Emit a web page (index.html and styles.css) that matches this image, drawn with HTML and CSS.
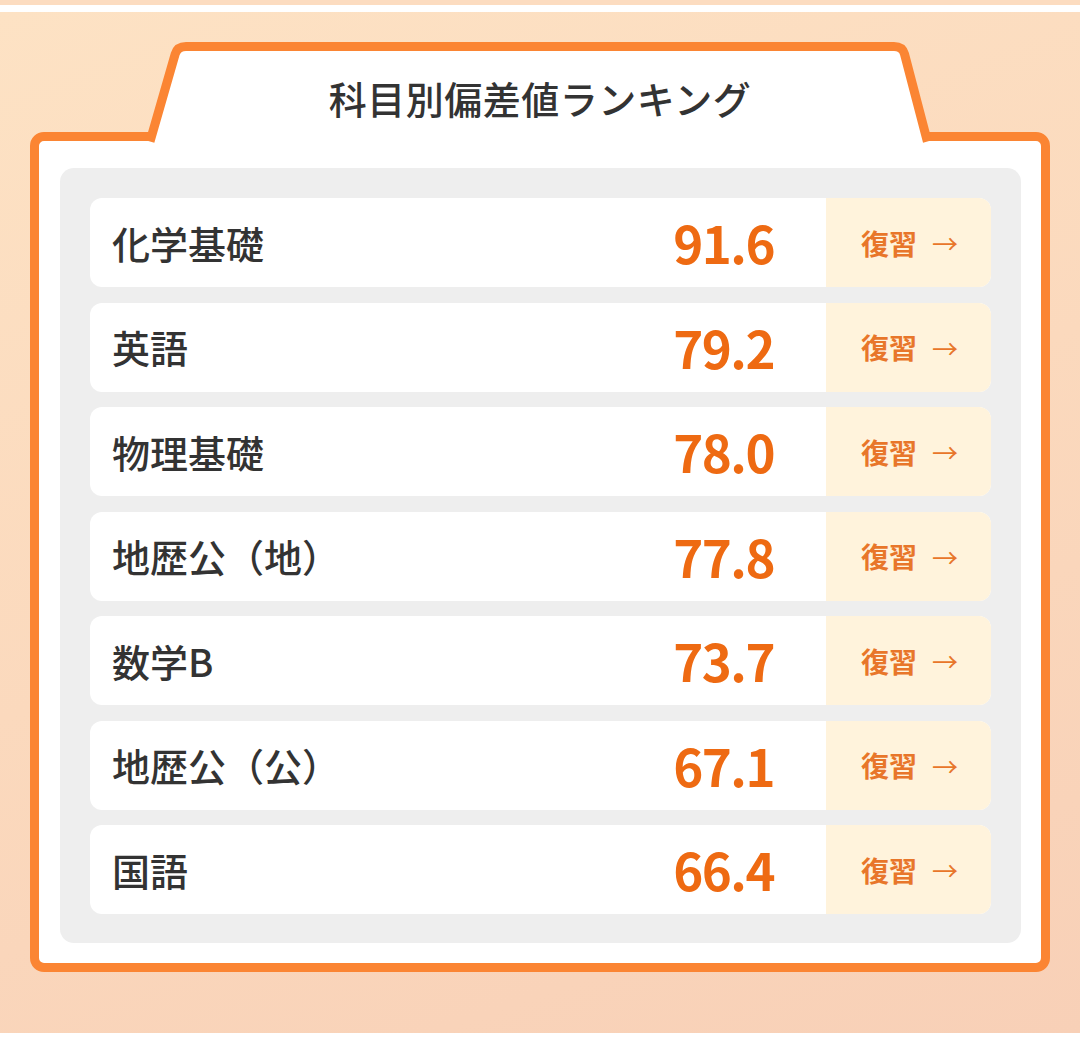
FILE: index.html
```html
<!DOCTYPE html>
<html lang="ja">
<head>
<meta charset="utf-8">
<title>科目別偏差値ランキング</title>
<link rel="stylesheet" href="styles.css">
</head>
<body>
<div class="strip"></div>
<div class="page">
  <div class="frame">
    <div class="tab">
      <svg class="tab-shape" width="1020" height="100" viewBox="0 0 1020 100" aria-hidden="true">
        <path d="M120 99.5 L145.2 12 Q147.4 4.5 156 4.5 L864 4.5 Q872.5 4.5 874.5 12 L897.4 99.5" fill="#ffffff" stroke="#fb8533" stroke-width="9" stroke-linejoin="round"/>
      </svg>
      <h1 class="title">科目別偏差値ランキング</h1>
    </div>
    <div class="card">
      <div class="panel">
        <div class="row"><span class="label">化学基礎</span><span class="score">91.6</span><a class="review">復習<span class="arrow">→</span></a></div>
        <div class="row"><span class="label">英語</span><span class="score">79.2</span><a class="review">復習<span class="arrow">→</span></a></div>
        <div class="row"><span class="label">物理基礎</span><span class="score">78.0</span><a class="review">復習<span class="arrow">→</span></a></div>
        <div class="row"><span class="label">地歴公（地）</span><span class="score">77.8</span><a class="review">復習<span class="arrow">→</span></a></div>
        <div class="row"><span class="label">数学B</span><span class="score">73.7</span><a class="review">復習<span class="arrow">→</span></a></div>
        <div class="row"><span class="label">地歴公（公）</span><span class="score">67.1</span><a class="review">復習<span class="arrow">→</span></a></div>
        <div class="row"><span class="label">国語</span><span class="score">66.4</span><a class="review">復習<span class="arrow">→</span></a></div>
      </div>
    </div>
  </div>
</div>
</body>
</html>
```

FILE: styles.css
```css
* { box-sizing: border-box; }
html, body { margin: 0; padding: 0; background: #ffffff; }
body {
  font-family: "Noto Sans CJK JP", "Noto Sans", sans-serif;
  color: #333333;
  width: 1080px;
}
.strip {
  height: 5px;
  background: #fcdcc0;
  margin-bottom: 7px;
}
.page {
  height: 1021px;
  padding-top: 30px;
  background: linear-gradient(160deg, #fde2c4 0%, #fbd9bd 50%, #f8d0b7 100%);
}
.frame {
  width: 1020px;
  margin-left: 30px;
}
.tab {
  position: relative;
  z-index: 2;
  height: 90px;
}
.tab-shape {
  position: absolute;
  top: 0;
  left: 0;
  overflow: visible;
}
.title {
  position: relative;
  margin: 0;
  padding-top: 34px;
  text-align: center;
  font-size: 38px;
  line-height: 44px;
  font-weight: 500;
  color: #333333;
  letter-spacing: 0.5px;
}
.card {
  position: relative;
  z-index: 1;
  background: #ffffff;
  border: 9px solid #fb8533;
  border-radius: 14px;
  padding: 27px 20px 20px 21px;
}
.panel {
  background: #eeeeee;
  border-radius: 14px;
  padding: 30px 30px 29px;
  display: flex;
  flex-direction: column;
  gap: 15.5px;
}
.row {
  height: 89px;
  background: #ffffff;
  border-radius: 12px;
  display: flex;
  align-items: center;
  overflow: hidden;
}
.label {
  flex: 1;
  padding-left: 22px;
  font-size: 38px;
  font-weight: 500;
  color: #333333;
  line-height: 1;
}
.score {
  font-size: 51px;
  font-weight: 700;
  color: #ee6a12;
  line-height: 1;
  margin-right: 52px;
  letter-spacing: -1.5px;
}
.review {
  width: 165px;
  height: 100%;
  background: #fff3dc;
  display: flex;
  align-items: center;
  justify-content: center;
  padding-left: 2px;
  font-size: 28px;
  font-weight: 700;
  color: #e8762a;
}
.arrow {
  font-weight: 400;
  margin-left: 15px;
  font-size: 26px;
}
```
